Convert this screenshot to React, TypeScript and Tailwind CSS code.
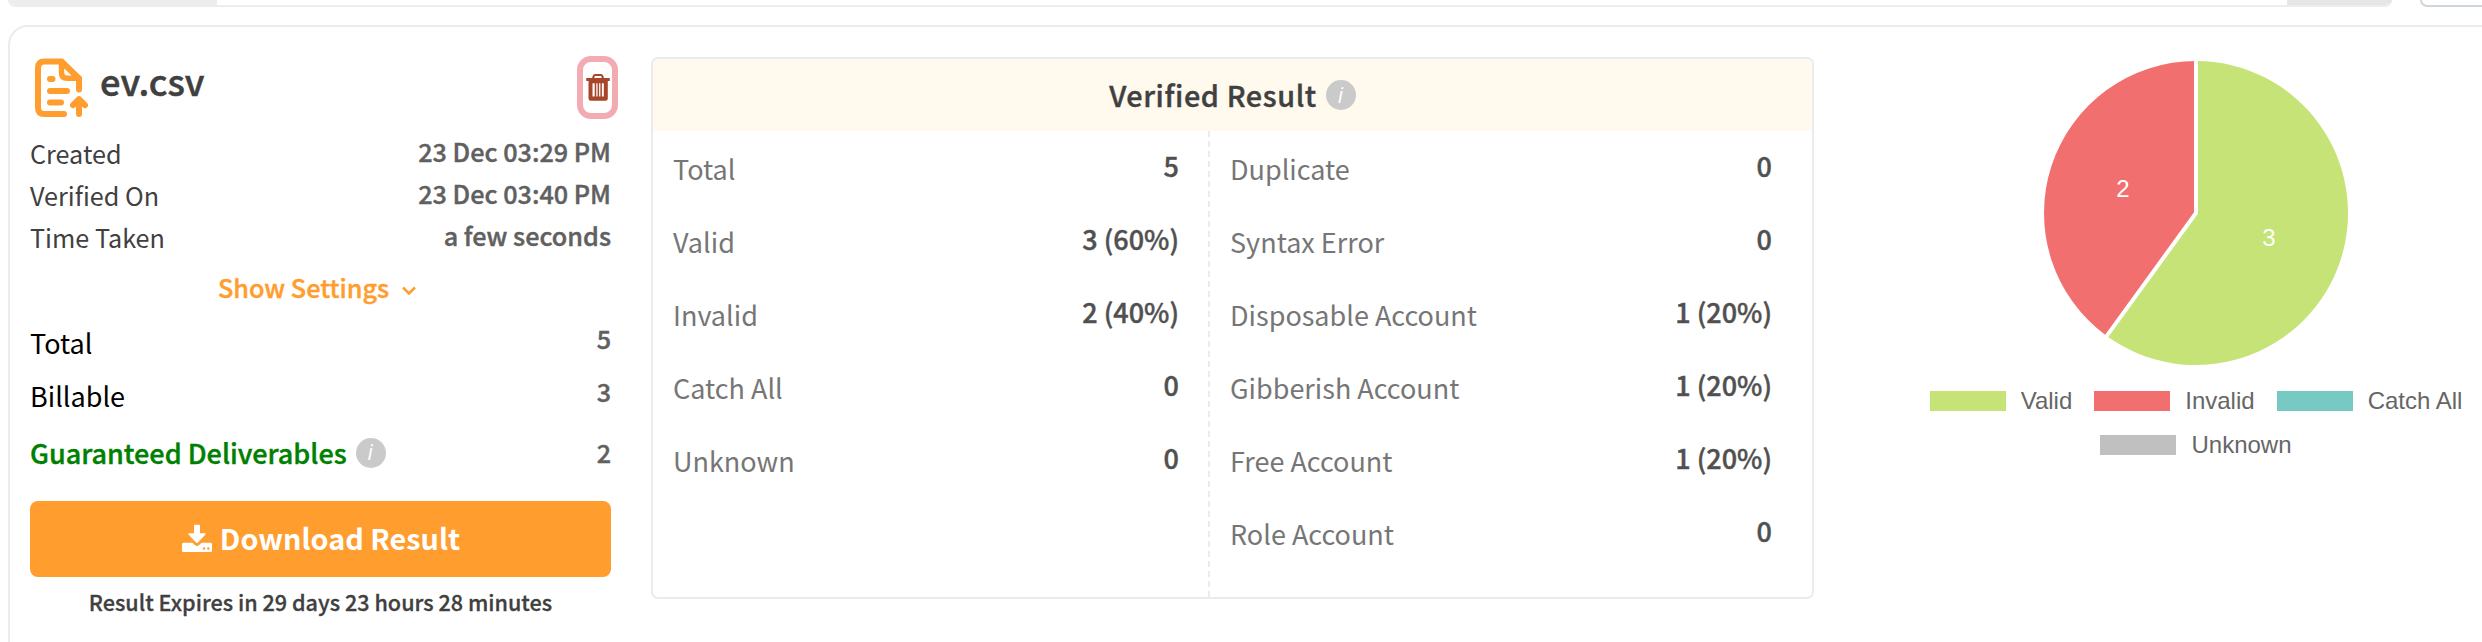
import React from 'react';

interface Stat {
  label: string;
  value: string;
}

const details: Stat[] = [
  { label: 'Created', value: '23 Dec 03:29 PM' },
  { label: 'Verified On', value: '23 Dec 03:40 PM' },
  { label: 'Time Taken', value: 'a few seconds' },
];

const totals: Stat[] = [
  { label: 'Total', value: '5' },
  { label: 'Billable', value: '3' },
];

const results: Stat[] = [
  { label: 'Total', value: '5' },
  { label: 'Valid', value: '3 (60%)' },
  { label: 'Invalid', value: '2 (40%)' },
  { label: 'Catch All', value: '0' },
  { label: 'Unknown', value: '0' },
];

const accounts: Stat[] = [
  { label: 'Duplicate', value: '0' },
  { label: 'Syntax Error', value: '0' },
  { label: 'Disposable Account', value: '1 (20%)' },
  { label: 'Gibberish Account', value: '1 (20%)' },
  { label: 'Free Account', value: '1 (20%)' },
  { label: 'Role Account', value: '0' },
];

const FileIcon = () => (
  <svg
    className="h-[60px] w-[54px] shrink-0"
    viewBox="35 57 54 60"
    fill="none"
    stroke="#ff9d2e"
    strokeWidth="6"
    strokeLinecap="round"
    strokeLinejoin="round"
  >
    <path d="M79 88.5V77.5L61.5 60.5H44.5Q38 60.5 38 67V106.5Q38 113 44.5 113H64" />
    <path d="M61.5 60.5V71.5Q61.5 77.3 67 77.3H79" strokeWidth="5.5" />
    <path d="M50 78H52.5M50 90H67M50 101.5H61" />
    <path d="M79 113V99M73 104.2L79 98.2L85 104.2" />
  </svg>
);

const TrashIcon = () => (
  <svg className="h-[28px] w-[24px]" viewBox="585.500 74 24 28" fill="#a8462a">
    <rect x="585.7" y="78" width="23.6" height="3" rx="0.6" />
    <path d="M592.3 79L593.3 75.9Q593.6 75 594.6 75H600.4Q601.4 75 601.7 75.9L602.7 79" fill="none" stroke="#a8462a" strokeWidth="2" />
    <path
      fillRule="evenodd"
      d="M588 80H607.3V98.2Q607.3 100.7 604.8 100.7H590.5Q588 100.7 588 98.2ZM592 83.2V96.5H594.2V83.2ZM595.8 83.2V96.5H597.1V83.2ZM598.6 83.2V96.5H599.9V83.2ZM601.4 83.2V96.5H603.3V83.2Z"
    />
  </svg>
);

const DownloadIcon = () => (
  <svg className="mb-[2px] h-[28px] w-[30px]" viewBox="0 0 30 28" fill="white">
    <path d="M13 0.7H17Q18 0.7 18 1.7V9.3H22.8Q24.4 9.3 23.4 10.6L16.3 18.3Q15 19.6 13.7 18.3L6.6 10.6Q5.6 9.3 7.2 9.3H12V1.7Q12 0.7 13 0.7Z" />
    <path
      fillRule="evenodd"
      d="M1.5 18.7H10.3L12.8 21Q15 22.8 17.2 21L19.7 18.7H28.5Q30 18.7 30 20.2V26.5Q30 28 28.5 28H1.5Q0 28 0 26.5V20.2Q0 18.7 1.5 18.7ZM20.8 24.5a1.2 1.2 0 1 0 2.4 0a1.2 1.2 0 1 0 -2.4 0ZM25.1 24.5a1.2 1.2 0 1 0 2.4 0a1.2 1.2 0 1 0 -2.4 0Z"
    />
  </svg>
);

const InfoBadge = () => (
  <span className="flex h-[30px] w-[30px] shrink-0 items-center justify-center rounded-full bg-[#cacaca] font-['Open_Sans',sans-serif] text-[21px] leading-none font-normal tracking-normal text-white italic [-webkit-text-stroke:0px]">
    <span className="pr-px">i</span>
  </span>
);

const ResultColumn = ({ items, className }: { items: Stat[]; className: string }) => (
  <div className={`pt-px ${className}`}>
    {items.map((item) => (
      <div key={item.label} className="flex h-[73px] items-center justify-between">
        <span className="text-[27px] leading-none text-[#767676]">{item.label}</span>
        <span className="pb-[6px] text-[27px] leading-none font-medium text-[#505050] [-webkit-text-stroke:0.4px]">{item.value}</span>
      </div>
    ))}
  </div>
);

const LegendItem = ({ color, label }: { color: string; label: string }) => (
  <div className="flex items-center gap-[15px]">
    <span className={`h-5 w-[76px] ${color}`} />
    <span>{label}</span>
  </div>
);

export default function App() {
  return (
    <div className="h-[642px] w-[2482px] overflow-hidden bg-white font-['Noto_Sans_CJK_SC',sans-serif] text-[#404040]">
      {/* Bottom edge of the search bar */}
      <div className="flex h-[25px] items-start pl-2">
        <div className="flex h-[7px] w-[2384px] shrink-0 justify-between overflow-hidden rounded-b-lg border-b-2 border-[#ededed]">
          <div className="-mb-[2px] h-[7px] w-[209px] bg-[#ededed]" />
          <div className="-mb-[2px] h-[7px] w-[105px] bg-[#e6e6e6]" />
        </div>
        <div className="ml-7 h-[7px] w-[100px] shrink-0 rounded-bl-lg border-b-2 border-l-2 border-[#cfd6db]" />
      </div>

      <div className="ml-2 flex h-[640px] w-[2600px] rounded-[20px] border-2 border-[#efeaec]">
        {/* File summary */}
        <div className="ml-5 w-[581px] shrink-0 pt-[29px]">
          <div className="flex h-[63px] items-center justify-between">
            <div className="flex items-center pl-[5px]">
              <FileIcon />
              <h1 className="ml-[11px] pb-[14px] text-[36.2px] leading-none font-medium [-webkit-text-stroke:0.5px]">ev.csv</h1>
            </div>
            <button className="-mr-[7px] flex h-[63px] w-[41px] items-center justify-center rounded-[14px] border-[6px] border-[#f3abb2]">
              <TrashIcon />
            </button>
          </div>

          <div className="mt-[14px]">
            {details.map((item) => (
              <div key={item.label} className="flex h-[42px] items-center justify-between text-[25.2px] leading-none">
                <span>{item.label}</span>
                <span className="pb-[5px] font-medium text-[#606060] [-webkit-text-stroke:0.4px]">{item.value}</span>
              </div>
            ))}
          </div>

          <div className="mt-[8px] flex h-[42px] items-center pl-[188px] text-[25.2px] leading-none font-medium text-[#ff9d2e] [-webkit-text-stroke:0.4px]">
            Show Settings
            <svg className="mt-[5px] ml-[13px] h-[10px] w-[14px]" viewBox="0 0 14 10" fill="none" stroke="currentColor" strokeWidth="2.5">
              <path d="M1 1.5L7 7.5L13 1.5" />
            </svg>
          </div>

          <div className="mt-[7px] text-black">
            {totals.map((item) => (
              <div key={item.label} className="flex h-[53px] items-center justify-between text-[27px] leading-none">
                <span>{item.label}</span>
                <span className="pb-[8px] text-[25.2px] font-medium text-[#606060] [-webkit-text-stroke:0.4px]">{item.value}</span>
              </div>
            ))}
            <div className="flex h-[61px] items-center justify-between">
              <div className="flex items-center gap-[9px] text-[27px] leading-none font-medium text-[#008000] [-webkit-text-stroke:0.4px]">
                Guaranteed Deliverables
                <InfoBadge />
              </div>
              <span className="text-[25.2px] leading-none font-medium text-[#606060] [-webkit-text-stroke:0.4px]">2</span>
            </div>
          </div>

          <button className="mt-[18px] flex h-[76px] w-full items-center justify-center gap-[8px] rounded-lg bg-[#ff9d2e] pb-px pl-px text-[28.8px] leading-none font-bold text-white">
            <DownloadIcon />
            Download Result
          </button>
          <p className="mt-[6px] text-center text-[21.6px] leading-[37px] font-medium [-webkit-text-stroke:0.3px]">
            Result Expires in 29 days 23 hours 28 minutes
          </p>
        </div>

        {/* Verified result */}
        <div className="mt-[30px] ml-10 h-[542px] w-[1163px] shrink-0 overflow-hidden rounded-[7px] border-2 border-[#ebebeb]">
          <div className="flex h-[72px] items-center justify-center gap-[9px] bg-[#fff9ee] text-[28.8px] leading-none font-medium tracking-[0.6px] [-webkit-text-stroke:0.4px]">
            Verified Result
            <InfoBadge />
          </div>
          <div className="flex h-[466px]">
            <ResultColumn items={results} className="w-[555px] pr-[29px] pl-[20px]" />
            <svg className="h-full w-[2px]" viewBox="0 0 2 466">
              <path d="M1 0V466" stroke="#ebebeb" strokeWidth="2" strokeDasharray="6 4" />
            </svg>
            <ResultColumn items={accounts} className="flex-1 pr-[40px] pl-[20px]" />
          </div>
        </div>

        {/* Pie chart */}
        <div className="ml-[114px] flex w-[536px] shrink-0 flex-col items-center pt-[32px] font-['Liberation_Sans',sans-serif] text-[24px] leading-none text-[#666666]">
          <svg className="h-[308px] w-[308px]" viewBox="-154 -154 308 308">
            <path d="M0 0V-152A152 152 0 1 1 -89.34 122.97Z" fill="#c6e377" />
            <path d="M0 0L-89.34 122.97A152 152 0 0 1 0 -152Z" fill="#f26f70" />
            <path d="M0 -154V0L-90.5 124.6" fill="none" stroke="white" strokeWidth="4" />
            <g className="text-[24px]" fill="white" textAnchor="middle">
              <text x="73" y="32.5">3</text>
              <text x="-73" y="-16">2</text>
            </g>
          </svg>
          <div className="mt-[22px] flex gap-[22px]">
            <LegendItem color="bg-[#c6e377]" label="Valid" />
            <LegendItem color="bg-[#f26f70]" label="Invalid" />
            <LegendItem color="bg-[#77c9c3]" label="Catch All" />
          </div>
          <div className="mt-5">
            <LegendItem color="bg-[#c0c0c0]" label="Unknown" />
          </div>
        </div>
      </div>
    </div>
  );
}
